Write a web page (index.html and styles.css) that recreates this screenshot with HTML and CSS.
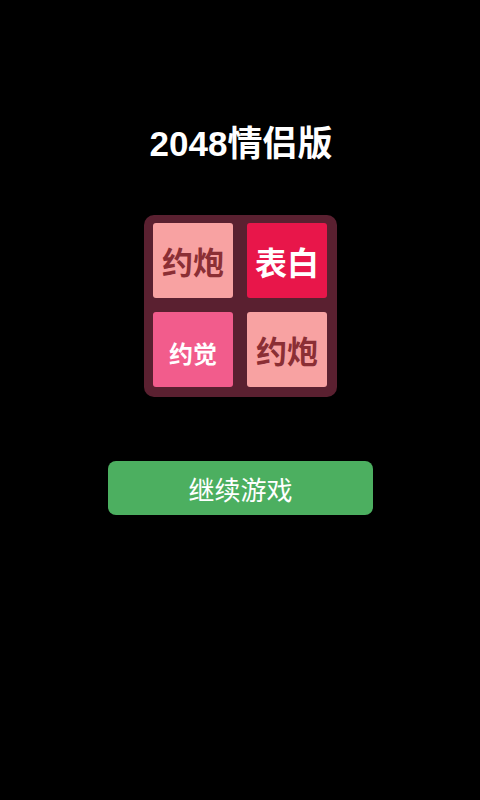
FILE: index.html
```html
<!DOCTYPE html>
<html lang="zh">
<head>
<meta charset="utf-8">
<link rel="stylesheet" href="styles.css">
</head>
<body>
<div class="screen">
  <h1 class="title">2048情侣版</h1>
  <div class="board">
    <div class="tile tile-pao">约炮</div>
    <div class="tile tile-bai">表白</div>
    <div class="tile tile-jue">约觉</div>
    <div class="tile tile-pao">约炮</div>
  </div>
  <button class="btn">继续游戏</button>
</div>
</body>
</html>
```
FILE: styles.css
```css
html, body {
  margin: 0;
  padding: 0;
  background: #000;
}
.screen {
  width: 480px;
  height: 800px;
  display: flex;
  flex-direction: column;
  align-items: center;
  font-family: "Noto Sans CJK SC", "Noto Sans", sans-serif;
}
.title {
  margin: 122px 0 0 2px;
  height: 44px;
  line-height: 44px;
  font-size: 35px;
  font-weight: bold;
  color: #fff;
  font-family: "Liberation Sans", "Noto Sans CJK SC", sans-serif;
}
.board {
  margin-top: 49px;
  margin-left: 1px;
  width: 193px;
  height: 182px;
  box-sizing: border-box;
  padding: 8px 10px 10px 9px;
  background: #5a2030;
  border-radius: 10px;
  display: grid;
  grid-template-columns: 80px 80px;
  grid-template-rows: 75px 75px;
  column-gap: 14px;
  row-gap: 14px;
}
.tile {
  border-radius: 3px;
  display: flex;
  align-items: center;
  justify-content: center;
  font-size: 31px;
  font-weight: bold;
  line-height: 1;
}
.tile-pao {
  background: #f8a2a2;
  color: #8b2f35;
}
.tile-bai {
  background: #e8164a;
  color: #fff;
  font-size: 32px;
}
.tile-jue {
  background: #f25c8c;
  color: #fff;
  font-size: 24px;
  padding-top: 6px;
}
.btn {
  margin-top: 64px;
  margin-left: 1px;
  width: 265px;
  height: 54px;
  border: none;
  border-radius: 8px;
  background: #4caf60;
  color: #fff;
  font-family: "Noto Sans CJK SC", sans-serif;
  font-size: 26px;
  font-weight: 400;
  padding: 0;
}
```
